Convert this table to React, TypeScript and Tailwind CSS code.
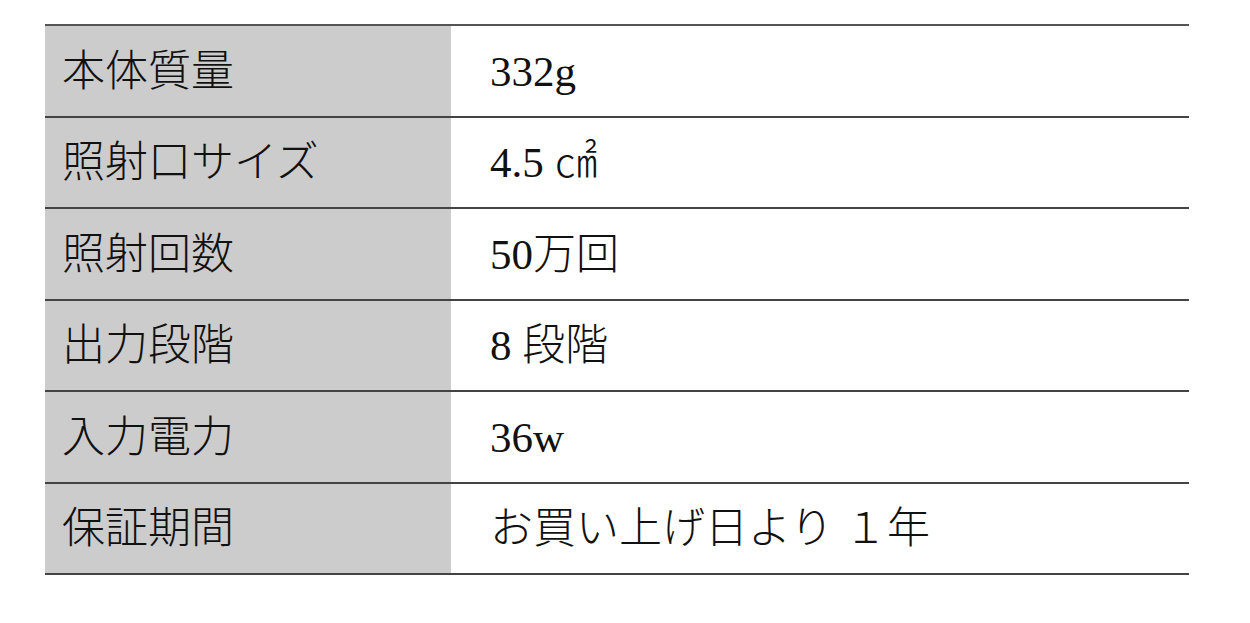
import React from "react";

const rows: [string, React.ReactNode][] = [
  ["本体質量", "332g"],
  ["照射口サイズ", "4.5 ㎠"],
  ["照射回数", "50万回"],
  ["出力段階", "8 段階"],
  ["入力電力", "36w"],
  ["保証期間", "お買い上げ日より １年"],
];

export default function App() {
  return (
    <div className="w-[1250px] h-[623px] bg-white pt-[24px] pl-[45px]" style={{ fontFamily: '"Liberation Serif", "Noto Sans CJK JP", serif' }}>
      <div className="w-[1144px] border-t-2 border-[#555]">
        {rows.map(([k, v], i) => (
          <div key={i} className="flex h-[91.5px] border-b-2 border-[#444] text-[#111]">
            <div className="w-[406px] bg-[#cccccc] flex items-center pl-[17px] pt-[2px] text-[43px] font-light">{k}</div>
            <div className="flex-1 flex items-center pl-[39px] pt-[2px] text-[43px] font-light">{v}</div>
          </div>
        ))}
      </div>
    </div>
  );
}
